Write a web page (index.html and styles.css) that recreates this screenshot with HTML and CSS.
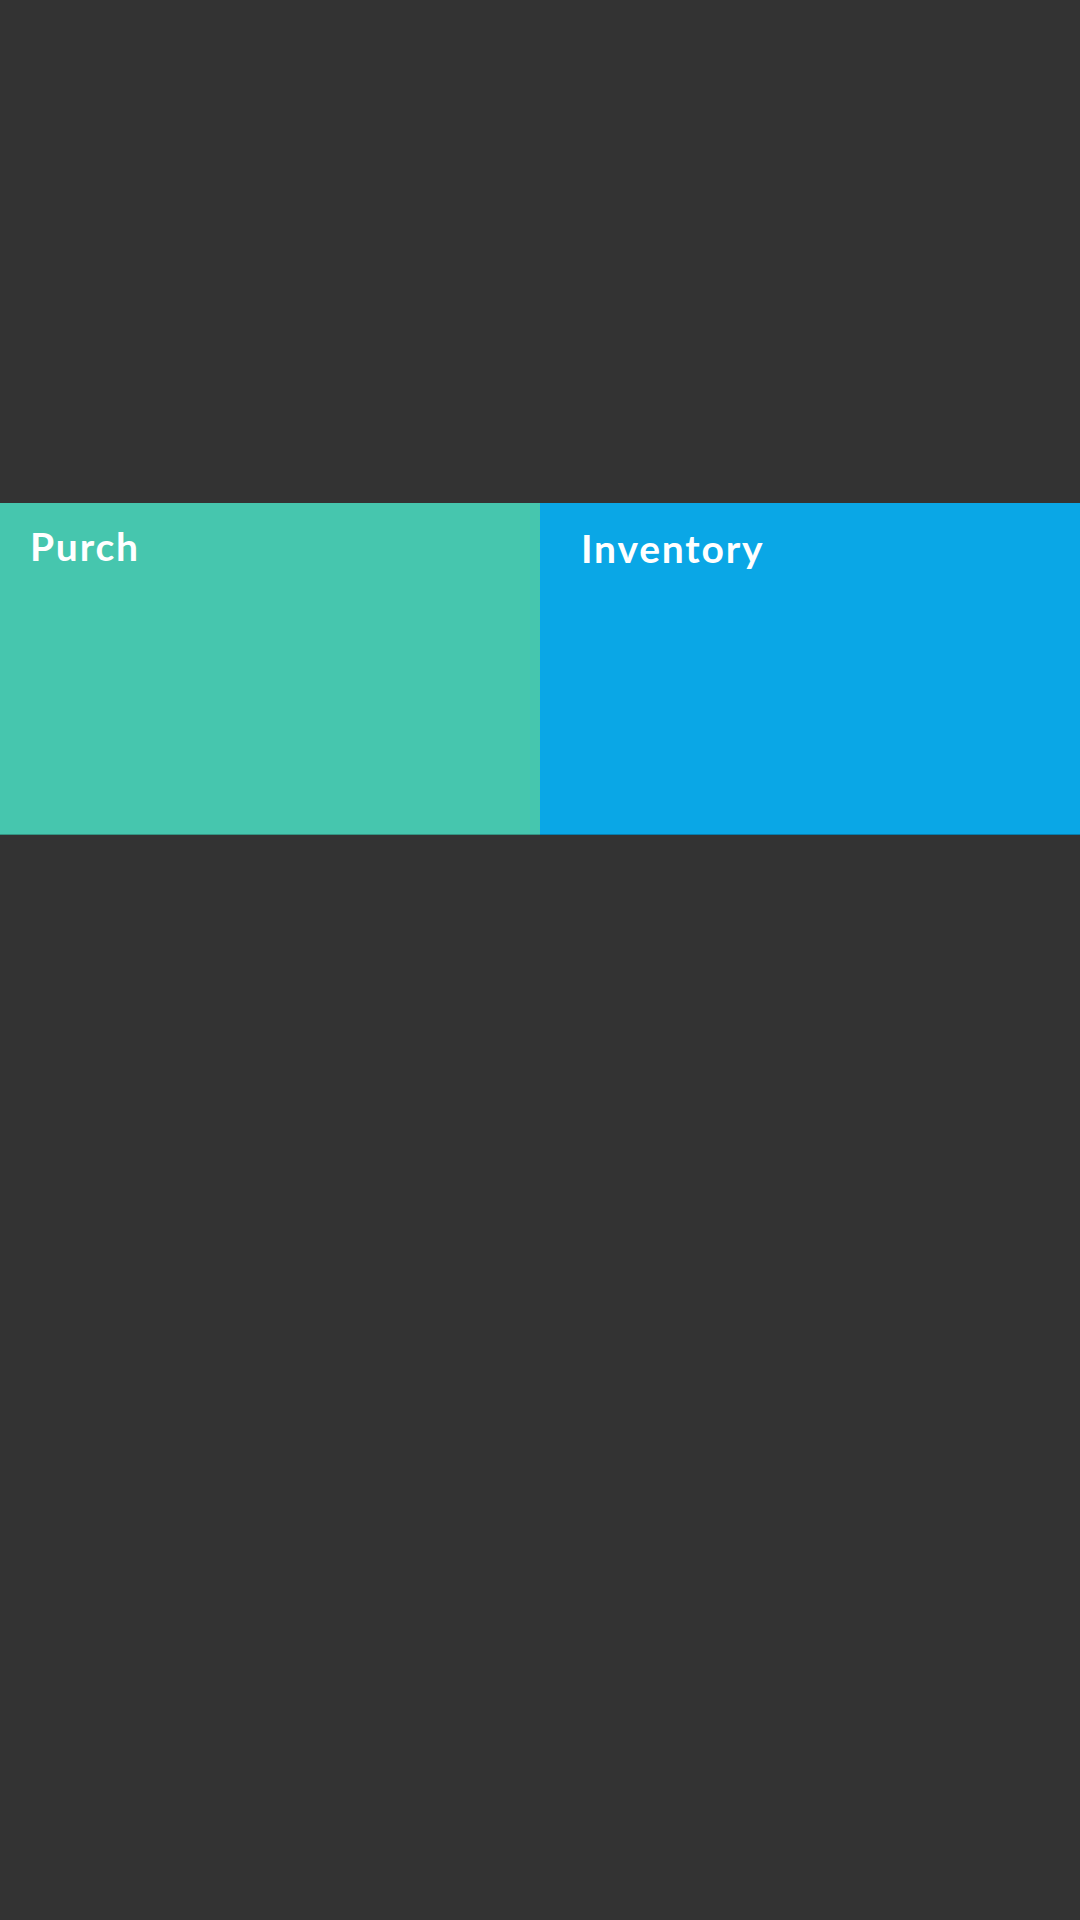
FILE: index.html
```html
<!DOCTYPE html>
<html>
<head>
<meta charset="utf-8">
<link rel="stylesheet" href="styles.css">
</head>
<body>
<div class="page">
  <div class="tiles">
    <div class="tile tile-purch"><span class="label">Purch</span></div>
    <div class="tile tile-inv"><span class="label">Inventory</span></div>
  </div>
</div>
</body>
</html>
```
FILE: styles.css
```css
html, body {
  margin: 0;
  padding: 0;
  background: #333333;
}
.page {
  width: 1080px;
  height: 1920px;
  padding-top: 503px;
  box-sizing: border-box;
}
.tiles {
  display: grid;
  grid-template-columns: 540px 540px;
  height: 332px;
}
.tile {
  box-sizing: border-box;
  border-bottom: 1px solid rgba(0, 0, 0, 0.25);
  font-family: Lato, "Open Sans", sans-serif;
  font-weight: 700;
  font-size: 39px;
  letter-spacing: 1.8px;
  color: #ffffff;
  line-height: 1;
}
.tile-purch {
  background: #46c6ae;
  padding: 24px 0 0 30px;
}
.tile-inv {
  background: #0aa7e6;
  padding: 26px 0 0 41px;
}
```
